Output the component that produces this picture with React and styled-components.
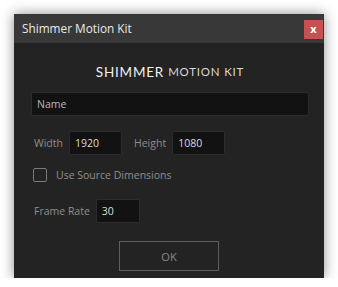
import React from 'react';
import styled, { createGlobalStyle } from 'styled-components';

const GlobalStyle = createGlobalStyle`
  html, body {
    margin: 0;
    padding: 0;
    background: #ffffff;
  }
  body {
    font-family: 'Open Sans', 'Noto Sans', sans-serif;
  }
`;

const Page = styled.div`
  padding: 14px 0 0 14px;
`;

const Window = styled.div`
  width: 310px;
  height: 264px;
  background: #232323;
  box-shadow: 0 0 12px rgba(0, 0, 0, 0.45);
  display: flex;
  flex-direction: column;
`;

const TitleBar = styled.div`
  height: 29px;
  background: #383838;
  display: flex;
  align-items: flex-start;
  justify-content: space-between;
  padding-left: 8px;
`;

const TitleText = styled.span`
  margin-top: 6px;
  font-size: 11.8px;
  line-height: 16px;
  color: #e8e8e8;
`;

const CloseButton = styled.div`
  width: 19px;
  height: 19px;
  margin: 6px 1px 0 0;
  background: #c75050;
  color: #ffffff;
  font-size: 11px;
  font-weight: 700;
  line-height: 17px;
  text-align: center;
`;

const Content = styled.div`
  display: flex;
  flex-direction: column;
  padding: 18px 15px 0 17px;
`;

const Heading = styled.div`
  height: 21px;
  display: flex;
  align-items: center;
  justify-content: center;
  gap: 4px;
  font-family: 'Lato', sans-serif;
  color: #e6e6e6;
  letter-spacing: 0.8px;
`;

const HeadingStrong = styled.span`
  font-size: 13.5px;
  font-weight: 400;
  color: #f0f0f0;
`;

const HeadingLight = styled.span`
  font-size: 11.5px;
  font-weight: 400;
  color: #d8d8d8;
`;

const Field = styled.div`
  box-sizing: border-box;
  width: ${p => p.$width || '100%'};
  height: 24px;
  background: #121212;
  border: 1px solid #2c2c2c;
  border-radius: 2px;
  padding-left: 5px;
  display: flex;
  align-items: center;
  font-size: 10.5px;
  color: ${p => (p.$muted ? '#b8b8b8' : '#dcdcdc')};
`;

const Row = styled.div`
  display: flex;
  align-items: center;
  margin-top: ${p => p.$top}px;
`;

const Label = styled.span`
  font-size: 10.5px;
  color: #8e8e8e;
  padding-left: 3px;
  margin-right: ${p => p.$gap || 6}px;
  margin-left: ${p => p.$left || 0}px;
`;

const Checkbox = styled.div`
  box-sizing: border-box;
  width: 14px;
  height: 14px;
  margin-left: 2px;
  border: 1.5px solid #7a7a7a;
  border-radius: 2px;
  margin-right: 9px;
`;

const CheckLabel = styled.span`
  font-size: 10.5px;
  color: #8e8e8e;
`;

const OkButton = styled.div`
  box-sizing: border-box;
  align-self: center;
  width: 100px;
  height: 30px;
  margin: 18px 0 0 -2px;
  border: 1px solid #5e5e5e;
  display: flex;
  align-items: center;
  justify-content: center;
  font-size: 11px;
  color: #8a8a8a;
`;

export default function App() {
  return (
    <Page>
      <GlobalStyle />
      <Window>
        <TitleBar>
          <TitleText>Shimmer Motion Kit</TitleText>
          <CloseButton>x</CloseButton>
        </TitleBar>
        <Content>
          <Heading>
            <HeadingStrong>SHIMMER</HeadingStrong>
            <HeadingLight>MOTION KIT</HeadingLight>
          </Heading>
          <Row $top={10}>
            <Field $muted>Name</Field>
          </Row>
          <Row $top={15}>
            <Label>Width</Label>
            <Field $width="53px">1920</Field>
            <Label $left={9}>Height</Label>
            <Field $width="53px">1080</Field>
          </Row>
          <Row $top={13}>
            <Checkbox />
            <CheckLabel>Use Source Dimensions</CheckLabel>
          </Row>
          <Row $top={17}>
            <Label>Frame Rate</Label>
            <Field $width="44px">30</Field>
          </Row>
          <OkButton>OK</OkButton>
        </Content>
      </Window>
    </Page>
  );
}
